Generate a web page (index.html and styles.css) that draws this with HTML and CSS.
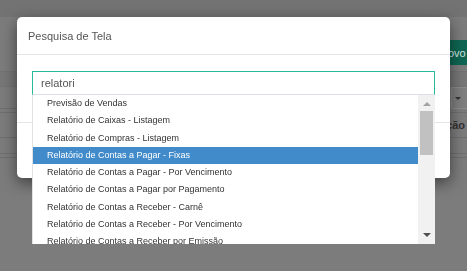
FILE: index.html
```html
<!DOCTYPE html>
<html lang="pt-BR">
	<head>
		<meta charset="UTF-8" />
		<meta name="viewport" content="width=device-width, initial-scale=1.0" />
		<title>Pesquisa de Tela</title>

		<link rel="stylesheet" href="styles.css">
	</head>
	<body>
		<div class="page">
			<div class="topbar"></div>
			<div class="toolbar">
				<button type="button" class="btnNovo">Novo</button>
			</div>
			<div class="filters">
				<div class="filterRow"></div>
				<div class="filterRow2">
					<div class="selectBox"><span class="selArrow"></span></div>
				</div>
				<div class="gridHead">
					<span class="headText">Ação</span>
				</div>
				<div class="gridRow"></div>
				<div class="gridRow"></div>
			</div>
		</div>

		<div class="modal">
			<div class="modalHeader">
				<h4>Pesquisa de Tela</h4>
			</div>
			<div class="modalBody">
				<div class="searchWrap">
					<input type="text" id="searchInput" class="searchInput" value="relatori" />
					<div class="dropdown">
						<ul class="options">
							<li>Previsão de Vendas</li>
							<li>Relatório de Caixas - Listagem</li>
							<li>Relatório de Compras - Listagem</li>
							<li class="selected">Relatório de Contas a Pagar - Fixas</li>
							<li>Relatório de Contas a Pagar - Por Vencimento</li>
							<li>Relatório de Contas a Pagar por Pagamento</li>
							<li>Relatório de Contas a Receber - Carnê</li>
							<li>Relatório de Contas a Receber - Por Vencimento</li>
							<li>Relatório de Contas a Receber por Emissão</li>
						</ul>
						<div class="scrollbar">
							<span class="arrowUp"></span>
							<div class="track">
								<div class="thumb"></div>
							</div>
							<span class="arrowDown"></span>
						</div>
					</div>
				</div>
			</div>
			<div class="modalFooter"></div>
		</div>
	</body>
</html>
```

FILE: styles.css
```css
* {
	box-sizing: border-box;
}

body {
	margin: 0;
	background-color: #7c7c7c;
	font-family: "Liberation Sans", Arial, sans-serif;
	overflow: hidden;
	height: 271px;
}

/* pagina atras do modal (ja escurecida) */
.topbar {
	height: 17px;
	background-color: #737373;
}

.toolbar {
	display: flex;
	justify-content: flex-end;
	margin-top: 23px;
	height: 25px;
	margin-right: -20px;
}

.btnNovo {
	background-color: #0f6653;
	color: #d6e6e1;
	border: none;
	border-radius: 3px;
	font-family: inherit;
	font-size: 11px;
	padding: 0 8px;
	width: 55px;
	text-align: left;
}

.filters {
	margin-top: 6px;
}

.filterRow {
	height: 16px;
	border-top: 1px solid #727272;
	border-bottom: 1px solid #727272;
	background-color: #777777;
}

.filterRow2 {
	display: flex;
	justify-content: flex-end;
	height: 22px;
	border-bottom: 1px solid #6f6f6f;
	margin-right: -10px;
}

.selectBox {
	width: 26px;
	height: 22px;
	border: 1px solid #8c8c8c;
	background-color: #7f7f7f;
	position: relative;
}

.selArrow {
	position: absolute;
	left: 3px;
	top: 9px;
	border-left: 3px solid transparent;
	border-right: 3px solid transparent;
	border-top: 3px solid #333;
}

.gridHead {
	margin-top: 3px;
	height: 26px;
	border-top: 1px solid #6f6f6f;
	border-bottom: 1px solid #6f6f6f;
	display: flex;
	align-items: center;
	justify-content: flex-end;
	padding-right: 2px;
}

.headText {
	font-size: 11px;
	font-weight: bold;
	color: #333;
}

.gridRow {
	height: 16px;
	border-bottom: 1px solid #6f6f6f;
}

.gridRow + .gridRow {
	height: 4px;
}

/* modal */
.modal {
	position: fixed;
	left: 17px;
	top: 17px;
	width: 433px;
	height: 161px;
	background-color: #fff;
	border-radius: 5px;
	box-shadow: 0 5px 15px rgba(0, 0, 0, 0.5);
}

.modalHeader {
	height: 38px;
	border-bottom: 1px solid #e5e5e5;
	display: flex;
	align-items: center;
	padding: 0 11px;
}

.modalHeader h4 {
	margin: 0;
	font-size: 11px;
	font-weight: normal;
	color: #555;
}

.modalBody {
	height: 67px;
	padding: 16px 15px 0;
}

.searchWrap {
	position: relative;
}

.searchInput {
	display: block;
	width: 100%;
	height: 24px;
	border: 1px solid #26b99a;
	border-bottom-color: #dcdfe4;
	padding: 0 8px;
	font-family: inherit;
	font-size: 11px;
	color: #555;
	outline: none;
}

.dropdown {
	position: absolute;
	left: 0;
	right: 0;
	top: 24px;
	height: 149px;
	display: flex;
	background-color: #fff;
	border-left: 1px solid #e2e2e2;
	z-index: 2;
}

.options {
	flex: 1;
	list-style: none;
	margin: 0;
	padding: 0;
	overflow: hidden;
}

.options li {
	height: 17.25px;
	line-height: 17.25px;
	padding-left: 14px;
	font-size: 9px;
	color: #333;
	white-space: nowrap;
}

.options li.selected {
	background-color: #418bca;
	color: #fff;
}

.scrollbar {
	width: 17px;
	background-color: #f1f1f1;
	display: flex;
	flex-direction: column;
	align-items: center;
}

.arrowUp {
	margin-top: 7px;
	border-left: 4px solid transparent;
	border-right: 4px solid transparent;
	border-bottom: 4px solid #a3a3a3;
}

.track {
	flex: 1;
	width: 100%;
	padding: 5px 2px 0;
}

.thumb {
	height: 44px;
	background-color: #c1c1c1;
}

.arrowDown {
	margin-bottom: 7px;
	border-left: 4px solid transparent;
	border-right: 4px solid transparent;
	border-top: 4px solid #505050;
}

.modalFooter {
	height: 55px;
	border-top: 1px solid #e5e5e5;
}
```
